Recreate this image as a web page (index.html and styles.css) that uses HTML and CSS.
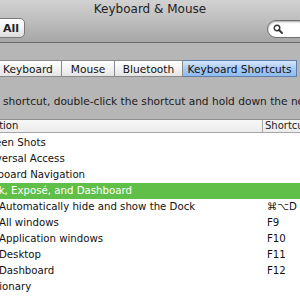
FILE: index.html
```html
<!DOCTYPE html>
<html lang="en">
<head>
  <meta charset="UTF-8" />
  <title>Keyboard &amp; Mouse</title>
  <link rel="stylesheet" href="styles.css">
</head>
<body>
  <div class="toolbar">
    <div class="title">Keyboard &amp; Mouse</div>
    <div class="tools">
      <button class="all-btn">All</button>
      <div class="search">
        <svg width="10" height="10" viewBox="0 0 10 10">
          <circle cx="4" cy="4" r="2.8" fill="none" stroke="#333" stroke-width="1.4"/>
          <line x1="6" y1="6" x2="9" y2="9" stroke="#333" stroke-width="1.8" stroke-linecap="round"/>
        </svg>
      </div>
    </div>
  </div>

  <div class="pane">
    <div class="tabs">
      <div class="tab first">Keyboard</div>
      <div class="tab">Mouse</div>
      <div class="tab">Bluetooth</div>
      <div class="tab selected">Keyboard Shortcuts</div>
    </div>

    <p class="hint">shortcut, double-click the shortcut and hold down the new keys.</p>

    <div class="table">
      <div class="head">
        <div class="col action">Action</div>
        <div class="col keys">Shortcut</div>
      </div>
      <div class="list">
        <div class="row cat"><span class="name">Screen Shots</span><span class="key"></span></div>
        <div class="row cat"><span class="name">Universal Access</span><span class="key"></span></div>
        <div class="row cat"><span class="name">Keyboard Navigation</span><span class="key"></span></div>
        <div class="row cat active"><span class="name">Dock, Exposé, and Dashboard</span><span class="key"></span></div>
        <div class="row item"><span class="name">Automatically hide and show the Dock</span><span class="key">⌘⌥D</span></div>
        <div class="row item"><span class="name">All windows</span><span class="key">F9</span></div>
        <div class="row item"><span class="name">Application windows</span><span class="key">F10</span></div>
        <div class="row item"><span class="name">Desktop</span><span class="key">F11</span></div>
        <div class="row item"><span class="name">Dashboard</span><span class="key">F12</span></div>
        <div class="row cat"><span class="name">Dictionary</span><span class="key"></span></div>
      </div>
    </div>
  </div>
</body>
</html>
```

FILE: styles.css
```css
body {
  margin: 0;
  width: 300px;
  height: 300px;
  overflow: hidden;
  background: #b6b6b6;
  font-family: "DejaVu Sans", sans-serif;
  font-size: 11px;
  color: #111;
}

.toolbar {
  height: 42px;
  background: linear-gradient(to bottom, #d2d2d2 0%, #bdbdbd 50%, #a6a6a6 100%);
  border-bottom: 1px solid #6c6c6c;
}

.title {
  height: 18px;
  line-height: 18px;
  text-align: center;
  font-size: 12px;
  color: #222;
}

.tools {
  display: flex;
  justify-content: space-between;
  align-items: center;
  height: 20px;
}

.all-btn {
  margin-left: -6px;
  width: 31px;
  height: 20px;
  padding: 0 0 0 8px;
  border: 1px solid #7a7a7a;
  border-radius: 5px;
  background: linear-gradient(to bottom, #ffffff 0%, #f2f2f2 50%, #dcdcdc 100%);
  font-family: "DejaVu Sans", sans-serif;
  font-size: 11px;
  font-weight: bold;
  color: #222;
  text-align: left;
}

.search {
  display: flex;
  align-items: center;
  width: 34px;
  height: 16px;
  margin-top: 2px;
  margin-right: -8px;
  padding-left: 5px;
  background: #fff;
  border: 1px solid #6f6f6f;
  border-radius: 9px;
  box-shadow: inset 0 1px 2px rgba(0,0,0,0.35);
}

.pane {
  padding-top: 17px;
}

.tabs {
  display: flex;
  height: 17px;
  font-size: 10.6px;
}

.tab {
  display: flex;
  align-items: center;
  justify-content: center;
  width: 53px;
  background: linear-gradient(to bottom, #ffffff 0%, #f3f3f3 50%, #e4e4e4 100%);
  border: 1px solid #8a8a8a;
  border-left: none;
  box-sizing: border-box;
  color: #111;
}

.tab.first {
  width: 62px;
  justify-content: flex-start;
  padding-left: 3px;
}

.tab:nth-child(3) {
  width: 68px;
}

.tab.selected {
  width: 114px;
  background: linear-gradient(to bottom, #d6e7fb 0%, #a9cbf3 50%, #8fbcf0 100%);
  border-color: #5c7fae;
}

.hint {
  margin: 17px 0 0 3px;
  height: 14px;
  line-height: 14px;
  white-space: nowrap;
  font-size: 10.6px;
  color: #1a1a1a;
}

.table {
  margin-top: 11px;
  background: #fff;
  height: 200px;
  border-bottom: 4px solid #8e9db3;
}

.head {
  display: flex;
  height: 12px;
  line-height: 12px;
  background: linear-gradient(to bottom, #f7f7f7 0%, #ececec 100%);
  border-top: 1px solid #8d8d8d;
  border-bottom: 1px solid #a7a7a7;
  font-size: 10px;
}

.col.action {
  flex-shrink: 0;
  width: 262px;
  margin-left: -13px;
  padding-right: 13px;
  border-right: 1px solid #a7a7a7;
}

.col.keys {
  padding-left: 2px;
  white-space: nowrap;
  color: #222;
}

.list {
  padding-top: 2px;
  font-size: 10.2px;
}

.row {
  display: flex;
  height: 16px;
  line-height: 16px;
  white-space: nowrap;
}

.row.cat .name {
  margin-left: -21px;
  width: 288px;
}

.row.item .name {
  margin-left: -1px;
  width: 268px;
}

.row.active {
  background: #5fbf48;
  color: #fff;
}
```
